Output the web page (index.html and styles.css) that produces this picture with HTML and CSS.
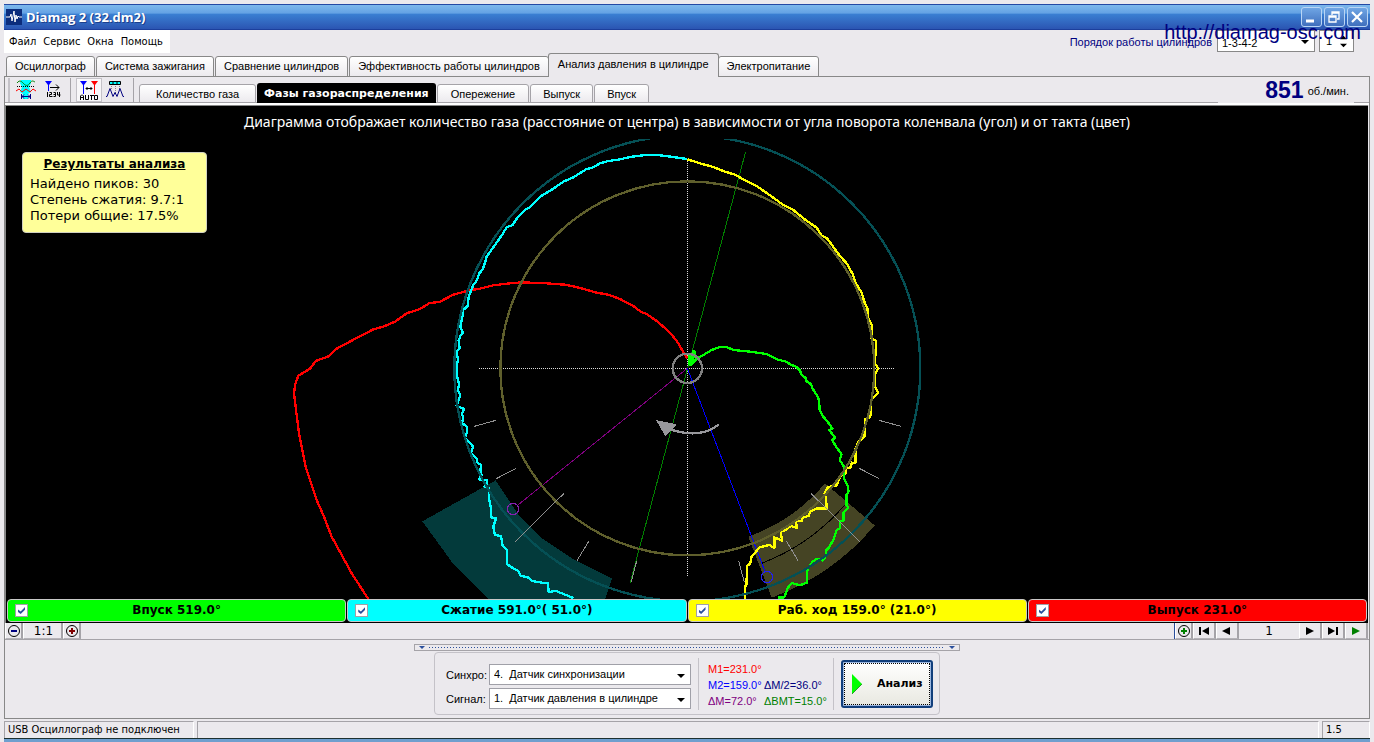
FILE: index.html
```html
<!DOCTYPE html>
<html lang="ru">
<head>
<meta charset="utf-8">
<title>Diamag 2 (32.dm2)</title>
<link rel="stylesheet" href="styles.css">
</head>
<body>
<header class="titlebar">
  <svg class="app-icon" viewBox="0 0 16 16" width="16" height="16"><rect width="16" height="16" fill="#0b2c7c"/><path d="M0 8h4l1-3 1 7 2-10 1 11 1-7 1 4 1-3 1 1h3" fill="none" stroke="#fff"/></svg>
  <h1 class="title">Diamag 2 (32.dm2)</h1>
  <button class="win-btn" aria-label="Свернуть"><svg viewBox="0 0 18 18"><path d="M4 13h8" stroke="#fff" stroke-width="3"/></svg></button>
  <button class="win-btn" aria-label="Развернуть"><svg viewBox="0 0 18 18"><path d="M4 8h7v6H4zM4 9h7M7 7V4h7v7h-2M7 5h7" fill="none" stroke="#fff" stroke-width="1.3"/></svg></button>
  <button class="win-btn" aria-label="Закрыть"><svg viewBox="0 0 18 18"><path d="M4 4l10 10M14 4L4 14" stroke="#fff" stroke-width="2.2"/></svg></button>
</header>
<div class="menurow">
  <nav class="menu">
    <button>Файл</button><button>Сервис</button><button>Окна</button><button>Помощь</button>
  </nav>
  <div class="order">
    <label for="order">Порядок работы цилиндров</label>
    <span class="combo order-combo"><select id="order"><option>1-3-4-2</option></select></span>
    <span class="spin"><input id="first" type="text" value="1" aria-label="Первый цилиндр"><svg viewBox="0 0 8 14" width="8" height="14"><path d="M0 5l4-4 4 4zM0 10l4 4 4-4z"/></svg></span>
  </div>
  <span class="watermark">http://diamag-osc.com</span>
</div>
<nav class="tabs">
  <button class="tab">Осциллограф</button>
  <button class="tab">Система зажигания</button>
  <button class="tab">Сравнение цилиндров</button>
  <button class="tab">Эффективность работы цилиндров</button>
  <button class="tab active">Анализ давления в цилиндре</button>
  <button class="tab">Электропитание</button>
</nav>
<main class="page">
  <div class="toolbar">
    <div class="tools">
      <button class="tool" aria-label="Фазы"><svg viewBox="0 0 22 22" width="22" height="22"><path d="M6 1h10v3l-2 4 2 5-3 2v5h-5v-5l-3-2 2-5-2-4z" fill="#0ff"/><path d="M2 4c3-4 5-1 7 1s4 2 6-1 3-2 5-1" fill="none" stroke="#008000"/><path d="M1 12l3-2 3 3 4-3 4 3 3-3 3 2" fill="none" stroke="#f00"/><path d="M2 7.500h18" stroke="#000" stroke-dasharray="1 1"/><path d="M7 17.500h8M9 15.500l-2 2 2 2M13 15.500l2 2-2 2M6.500 15v5M15.500 15v5" fill="none" stroke="#000080"/></svg></button>
      <button class="tool" aria-label="Нумерация"><svg viewBox="0 0 22 22" width="22" height="22"><path d="M2 2h7L6 6v6H5V6z" fill="#00f"/><path d="M7 8.500h9M13 5.500l3 3-3 3" fill="none" stroke="#000"/><path d="M4.500 13v5M6.500 13.500h2v2h-2v2h3M10.500 13.500h2v4h-2M10.500 15.500h2M14.500 13v3h3M16.500 13v5" fill="none" stroke="#000"/></svg></button>
      <button class="tool pressed" aria-label="Авто"><svg viewBox="0 0 22 22" width="22" height="22"><path d="M2 2h7L6 6v9H5V6z" fill="#00f"/><path d="M13 2h7l-3 4v9h-1V6z" fill="#f00"/><path d="M8 9.500h6M9.500 8L8 9.500 9.500 11M12.500 8l1.500 1.500-1.500 1.500" fill="none" stroke="#000"/><path d="M2.500 21v-4l1-1h1l1 1v4M2.500 18.500h3M7.500 16v4.500h3V16M12 16.500h4M13.500 16v5M16.500 16.500h3v4h-3z" fill="none" stroke="#000"/></svg></button>
      <button class="tool" aria-label="Пики"><svg viewBox="0 0 22 22" width="22" height="22"><path d="M4.500 2.500h11v3h-11z" fill="#0ff" stroke="#000"/><path d="M8 3v2M12 3v2" stroke="#000"/><path d="M6.500 7v4M10.500 7v7M14.500 7v4" stroke="#888" stroke-dasharray="1 1"/><path d="M1 17.500h1l3-8 3 8 2-4 2 4 3-8 3 8h1" fill="none" stroke="#000080"/></svg></button>
    </div>
    <nav class="subtabs">
      <button class="subtab">Количество газа</button>
      <button class="subtab active">Фазы газораспределения</button>
      <button class="subtab wide">Опережение</button>
      <button class="subtab">Выпуск</button>
      <button class="subtab">Впуск</button>
    </nav>
    <div class="rpm"><strong>851</strong><span>об./мин.</span></div>
  </div>
  <section class="plot">
    <p class="caption">Диаграмма отображает количество газа (расстояние от центра) в зависимости от угла поворота коленвала (угол) и от такта (цвет)</p>
    <svg class="chart" viewBox="-822 27 4086 1380" fill="none" shape-rendering="crispEdges" role="img" aria-label="Диаграмма фаз">
      <path fill="#033a3b" d="M647 1051L427 1174 520 1302 625 1407H975L996 1346 884 1290 786 1225 715 1154z"/>
      <g transform="translate(1170 690)">
        <path fill="#454424" d="M465 370L614 496A733 733 0 0 1 305 713L235 530A538 538 0 0 0 465 370z"/>
        <path stroke="#000" stroke-width="3" d="M275 610A626 626 0 0 0 527 432"/>
      </g>
      <path stroke="#dcdcdc" stroke-width="3" stroke-dasharray="3 3" d="M598 715.500H1842M1222.500 88V1342"/>
      <path stroke="#008000" stroke-width="3" d="M1397 65L1050 1360"/>
      <path stroke="#800080" stroke-width="3" d="M1222 715L715 1124"/><circle cx="699" cy="1137" r="17" stroke="#8520b0" stroke-width="3"/>
      <path stroke="#0000ff" stroke-width="3" d="M1222 715L1455 1325"/><circle cx="1461" cy="1341" r="17" stroke="#2222f0" stroke-width="3"/>
      <g stroke-width="7" stroke-linejoin="round">
        <path stroke="#f00" d="M1222 685L1208 663 1190 632 1165 603 1130 573 1100 552 1082 545 1060 528 1020 507 985 494 950 488 915 478 880 469 855 464 800 460 725 457 680 461 640 466 600 476 568 481 520 494 480 515 447 520 420 537 380 550 345 575 310 590 280 598 230 624 168 657 148 678 107 693 90 716 55 737 45 765 42 790 48 840 57 910 68 965 77 1010 95 1065 112 1115 130 1155 155 1220 185 1275 215 1330 265 1407"/>
        <path stroke="#0ff" d="M1222 87L1200 84 1165 79 1130 75 1095 75 1050 81 1020 88 985 93 960 100 940 112 918 118 880 142 850 155 820 176 780 200 750 232 733 241 710 266 698 285 680 292 668 312 645 345 620 380 615 398 608 418 598 430 590 452 580 465 572 485 566 500 563 528 550 540 547 560 541 590 549 607 541 618 536 632 539 655 530 665 534 690 529 710 530 735 538 765 533 778 541 795 536 810 530 827 552 837 546 850 550 868 545 878 561 890 562 902 555 925 570 938 579 950 573 970 590 985 592 998 603 1005 601 1025 605 1035 597 1048 620 1050 622 1060 614 1070 626 1074 628 1110 634 1140 632 1162 648 1165 640 1190 645 1215 663 1218 668 1248 680 1260 680 1302 700 1315 715 1323 722 1338 742 1341 757 1353 785 1358 804 1358 806 1387 825 1382 846 1390 880 1404"/>
        <path stroke="#ff0" transform="translate(1170 0)" d="M52 88L75 95 100 103 120 108 140 115 165 125 195 134 225 151 260 168 300 196 340 225 370 240 400 265 425 283 440 293 455 317 472 326 490 351 510 378 530 400 548 432 555 455 575 488 583 515 592 535 595 565 606 585 604 625 618 632 617 670 614 700 625 715 614 735 615 770 625 788 612 800 602 812 604 840 600 862 584 868 586 895 583 920 565 935 556 958 556 1000 545 998 543 1012 528 1015 528 1030 514 1035 498 1068 474 1071 464 1090 468 1105 470 1135 440 1135 420 1145 416 1158 398 1162 396 1174 378 1172 380 1194 362 1188 343 1202 332 1204 336 1232 313 1222 313 1254 298 1245 270 1252 262 1260 245 1280 240 1302 232 1306 229 1365 225 1370 225 1407"/>
        <path stroke="#0f0" transform="translate(1170 0)" d="M60 708L78 688 100 675 125 660 150 651 170 651 190 660 240 665 290 672 320 688 345 694 365 705 380 711 390 722 394 733 408 745 410 755 423 762 428 776 440 795 447 810 449 840 460 860 475 878 487 895 478 900 495 923 487 930 497 948 515 973 509 990 522 1010 522 1045 533 1068 536 1085 529 1095 529 1125 534 1133 520 1148 520 1172 509 1175 510 1195 500 1200 490 1230 477 1252 468 1262 467 1280 458 1292 440 1286 428 1295 416 1312 410 1330 411 1358 390 1366 365 1359 353 1374 343 1402H325M56 706L70 662 75 668 64 705M58 703V676"/>
        <circle cx="1222" cy="715" r="699" stroke="#055055"/>
        <circle cx="1222" cy="715" r="561" stroke="#5f5f2c"/>
        <circle cx="1222" cy="715" r="44" stroke="#808080"/>
        <path stroke="#98989c" d="M1317 883C1275 918 1222 915 1170 898"/>
      </g>
      <path fill="#98989c" d="M1128 870L1190 883 1156 919z"/>
      <path stroke="#909090" stroke-width="3" d="M583 889L648 871M649 1046L708 1015M706 1235L852 1090M891 1292L926 1234M1054 1355L1070 1293M1797 871L1863 889M1738 1015L1797 1046M1593 1090L1739 1235M1519 1233L1554 1292M1376 1293L1393 1357"/>
    </svg>
    <aside class="results">
      <h2>Результаты анализа</h2>
      <p>Найдено пиков: 30</p>
      <p>Степень сжатия: 9.7:1</p>
      <p>Потери общие: 17.5%</p>
    </aside>
    <div class="legend">
      <label class="stroke intake"><input type="checkbox" checked><span>Впуск 519.0°</span></label>
      <label class="stroke compression"><input type="checkbox" checked><span>Сжатие 591.0°( 51.0°)</span></label>
      <label class="stroke power"><input type="checkbox" checked><span>Раб. ход 159.0° (21.0°)</span></label>
      <label class="stroke exhaust"><input type="checkbox" checked><span>Выпуск 231.0°</span></label>
    </div>
  </section>
  <div class="pager">
    <button class="cell small" aria-label="Уменьшить"><svg viewBox="0 0 14 14" width="14" height="14"><circle cx="7" cy="7" r="5.500" fill="none" stroke="#000"/><path d="M4 7h6" stroke="#000080" stroke-width="2"/></svg></button>
    <output class="cell scale">1:1</output>
    <button class="cell small" aria-label="Увеличить"><svg viewBox="0 0 14 14" width="14" height="14"><circle cx="7" cy="7" r="5.500" fill="none" stroke="#000"/><path d="M4 7h6M7 4v6" stroke="#800000" stroke-width="2"/></svg></button>
    <span class="spacer"></span>
    <button class="cell small" aria-label="Добавить"><svg viewBox="0 0 14 14" width="14" height="14"><circle cx="7" cy="7" r="5.500" fill="none" stroke="#000"/><path d="M4 7h6M7 4v6" stroke="#008000" stroke-width="2"/></svg></button>
    <button class="cell nav" aria-label="Первый"><svg viewBox="0 0 14 10" width="14" height="10"><path d="M2 1h2v8H2zM12 1v8L5 5z"/></svg></button>
    <button class="cell nav" aria-label="Назад"><svg viewBox="0 0 14 10" width="14" height="10"><path d="M10 1v8L2 5z"/></svg></button>
    <output class="cell number">1</output>
    <button class="cell nav" aria-label="Вперёд"><svg viewBox="0 0 14 10" width="14" height="10"><path d="M3 1v8l8-4z"/></svg></button>
    <button class="cell nav" aria-label="Последний"><svg viewBox="0 0 14 10" width="14" height="10"><path d="M10 1h2v8h-2zM2 1v8l7-4z"/></svg></button>
    <button class="cell nav" aria-label="Пуск"><svg viewBox="0 0 14 10" width="14" height="10"><path d="M3 1v8l8-4z" fill="#008000"/></svg></button>
  </div>
  <div class="panel">
    <div class="splitter"><i class="tri"></i><i class="dots"></i><i class="tri"></i></div>
    <div class="group">
      <div class="sources">
        <label for="sync">Синхро:</label>
        <span class="combo"><select id="sync"><option>4.&nbsp; Датчик синхронизации</option></select></span>
        <label for="signal">Сигнал:</label>
        <span class="combo"><select id="signal"><option>1.&nbsp; Датчик давления в цилиндре</option></select></span>
      </div>
      <div class="marks">
        <span class="m1">M1=231.0°</span><span></span>
        <span class="m2">M2=159.0°</span><span class="half">ΔM/2=36.0°</span>
        <span class="dm">ΔM=72.0°</span><span class="bmt">ΔВМТ=15.0°</span>
      </div>
      <button class="analyze"><svg viewBox="0 0 10 20" width="10" height="20"><path d="M0 0l10 10L0 20z" fill="#0f0"/><path d="M0 20L10 10" stroke="#2a9a2a"/></svg><span>Анализ</span></button>
    </div>
  </div>
</main>
<footer class="status">
  <span class="state">USB Осциллограф не подключен</span><span class="message"></span><span class="version">1.5</span>
</footer>
<div class="edge"></div>
</body>
</html>
```
FILE: styles.css
```css
* { box-sizing: border-box; }
html, body { margin: 0; }
body {
  display: flex;
  flex-direction: column;
  height: 100vh;
  min-height: 560px;
  padding: 4px 4px 0;
  background: linear-gradient(#ebe9ed, #ebe9ed) content-box, #fff;
  color: #000;
  font: 11px/13px "Liberation Sans", Arial, sans-serif;
}
button { font: inherit; color: inherit; margin: 0; padding: 0; border: 0; background: none; }
h1, h2, p { margin: 0; font-size: inherit; }

.titlebar {
  flex: none;
  display: flex;
  align-items: center;
  gap: 2px;
  height: 26px;
  padding: 0 2px;
  border-top: 1px solid #2449a4;
  border-bottom: 1px solid #1c3f9c;
  background: linear-gradient(#7db8ec, #64a2e4 34%, #3a7fd2 38%, #2b55b2);
}
.title {
  flex: 1;
  padding-left: 2px;
  color: #fff;
  font: bold 13px/22px "Open Sans", "Noto Sans", sans-serif;
  text-shadow: 1px 1px #1c3f8c;
}
.win-btn {
  width: 21px;
  height: 20px;
  border: 1px solid #b9d5f5;
  border-radius: 3px;
  background: linear-gradient(#6fa5e4, #3f6fbd);
}
.win-btn svg { display: block; width: 18px; height: 18px; }

.menurow { flex: none; position: relative; display: flex; justify-content: space-between; height: 23px; }
.menu {
  display: flex;
  gap: 7px;
  width: 166px;
  padding-left: 5px;
  background: #fff;
  font: 11px/24px "DejaVu Sans Condensed", "DejaVu Sans", sans-serif;
}
.order { display: flex; gap: 4px; padding-right: 16px; color: #000080; line-height: 24px; }
.combo { position: relative; display: block; }
.combo select {
  display: block;
  width: 100%;
  height: 100%;
  padding: 0 4px;
  border: 1px solid #a0a0a8;
  border-radius: 0;
  appearance: none;
  background: #fff;
  color: #000;
  font: inherit;
}
.combo::after {
  content: "";
  position: absolute;
  right: 6px;
  top: 50%;
  margin-top: -1px;
  border: 4px solid transparent;
  border-top-color: #000;
  border-bottom: 0;
}
.order-combo { width: 98px; height: 22px; margin-left: 1px; }
.order-combo select { border-color: #888; }
.spin { display: flex; align-items: center; width: 35px; height: 22px; padding-right: 6px; border: 1px solid #888; background: #fff; }
.spin input { width: 20px; padding: 0 0 0 6px; border: 0; background: none; font: inherit; line-height: 16px; }
.watermark { position: absolute; right: 9px; top: -9px; color: #000080; font-size: 20px; line-height: 23px; }

.tabs { flex: none; display: flex; align-items: flex-end; gap: 1px; height: 24px; padding-left: 2px; position: relative; z-index: 1; margin-bottom: -1px; }
.tab {
  height: 21px;
  padding: 0 8px;
  border: 1px solid #888;
  border-radius: 3px 3px 0 0;
  background: linear-gradient(#fff, #eceaee);
}
.tab.active { height: 24px; margin: 0 -2px; padding: 0 9px 2px; border-bottom: 0; background: #ebe9ed; }

.page { flex: 1; min-height: 0; display: flex; flex-direction: column; border: 1px solid #888; }
.toolbar { flex: none; display: flex; height: 28px; padding: 1px 0 0 3px; background: linear-gradient(#a5a3a8, #a5a3a8) 0 25px / 100% 1px no-repeat, linear-gradient(#fff, #fff) 0 26px / 100% 2px no-repeat; }
.tools { display: flex; width: 127px; height: 24px; border-left: 2px solid #c4c2c8; }
.tool { width: 28px; height: 24px; padding-left: 5px; }
.tool svg { display: block; }
.tool:nth-child(2) { width: 33px; border-right: 1px solid #a5a3a8; }
.tool:nth-child(3) { margin-left: 5px; }
.tool.pressed { width: 26px; background: #f8f7f9; border: 1px solid #c4c2c8; padding-left: 1px; }
.tool:nth-child(4) { width: 32px; border-right: 1px solid #a5a3a8; padding-left: 3px; }
.subtabs { display: flex; align-items: flex-end; gap: 1px; height: 25px; padding-left: 4px; flex: 1; }
.subtab {
  height: 19px;
  padding: 1px 12px 0;
  border: 1px solid #a5a3a8;
  border-radius: 3px 3px 0 0;
  background: linear-gradient(#fff, #eceaee);
}
.subtab:first-child { padding: 1px 16px 0; }
.subtab.wide { padding: 1px 13px 0; }
.subtab.active { height: 20px; padding: 0 7px; border: 0; background: #000; color: #fff; font: bold 11px/13px "DejaVu Sans", sans-serif; }
.rpm { display: flex; align-items: center; gap: 4px; width: 136px; height: 25px; margin-right: 15px; background: #ebe9ed; justify-content: flex-end; padding-right: 5px; }
.rpm strong { color: #000080; font-size: 23px; line-height: 25px; }
.rpm span { padding-top: 2px; }

.plot { position: relative; flex: 1; min-height: 0; display: flex; flex-direction: column; margin-right: 1px; border-top: 1px solid #888; border-left: 1px solid #888; background: #000; }
.caption { flex: none; height: 33px; color: #fff; text-align: center; font: 14px/31px "Noto Sans", sans-serif; }
.chart { display: block; flex: 1 1 0; width: 100%; min-height: 0; }
.results {
  position: absolute;
  left: 16px;
  top: 46px;
  width: 185px;
  height: 81px;
  padding: 3px 7px;
  border: 1px solid #d0d0c0;
  border-radius: 4px;
  background: #ff9;
  font: 13px/16px "DejaVu Sans", sans-serif;
}
.results h2 { margin-bottom: 4px; text-align: center; text-decoration: underline; font-size: 12px; line-height: 16px; }
.legend { flex: none; display: grid; grid-template-columns: repeat(4, 1fr); gap: 1px; padding: 0 1px 1px; }
.stroke { display: flex; align-items: center; height: 23px; padding: 0 7px; border: 1px solid #c8c8c8; border-radius: 4px; font: bold 12px/21px "DejaVu Sans", sans-serif; }
.stroke span { flex: 1; padding-right: 13px; text-align: center; }
.stroke input { width: 13px; height: 13px; margin: 0; border: 1px solid #a0a0a8; appearance: none; background: #fff; }
.stroke input:checked::before { content: ""; display: block; width: 7px; height: 7px; margin: 2px; background: #2a4f9c; clip-path: polygon(0 35%, 38% 65%, 100% 0, 100% 40%, 38% 100%, 0 70%); }
.intake { background: #0f0; }
.compression { background: #0ff; }
.power { background: #ff0; }
.exhaust { background: #f00; }

.pager { flex: none; display: flex; height: 17px; padding-right: 1px; border-bottom: 1px solid #a5a3a8; }
.cell { display: flex; align-items: center; justify-content: center; height: 16px; border-right: 2px solid #a5a3a8; border-bottom: 1px solid #b5b3b8; border-left: 1px solid #fff; font: 12px/16px "DejaVu Sans", sans-serif; }
.cell svg { display: block; }
.small { width: 18px; }
.scale { width: 40px; padding-left: 2px; }
.nav { width: 23px; }
.number { width: 60px; border: 0; }
.spacer { flex: 1; border-right: 1px solid #2a4f9c; }

.panel { flex: none; display: flex; flex-direction: column; align-items: center; height: 78px; padding-top: 4px; }
.splitter { display: flex; align-items: center; gap: 4px; width: 546px; height: 7px; padding: 0 4px; border: 1px solid #a5a3a8; }
.tri { border: 3px solid transparent; border-top-color: #2a4f9c; border-bottom: 0; }
.dots { flex: 1; height: 1px; background: repeating-linear-gradient(90deg, #2a4f9c 0 1px, transparent 1px 3px); }
.group { display: flex; align-items: center; width: 506px; height: 63px; margin-top: 1px; padding: 0 6px 0 11px; border: 1px solid #c4c2c8; border-radius: 4px; }
.sources { display: grid; grid-template-columns: 39px 202px; grid-auto-rows: 21px; gap: 3px 4px; align-items: center; padding-top: 6px; }
.sources label { padding-top: 2px; white-space: nowrap; }
.sources .combo { height: 21px; }
.marks { display: grid; grid-template-columns: 52px auto; grid-auto-rows: 16px; align-items: center; gap: 0 4px; width: 136px; margin-left: 7px; padding: 4px 0 0 9px; border: solid #c4c2c8; border-width: 0 1px; }
.m1 { color: #f00; }
.m2 { color: #00f; }
.half { color: #000080; }
.dm { color: #800080; }
.bmt { color: #008000; }
.analyze {
  display: flex;
  align-items: center;
  gap: 15px;
  width: 92px;
  height: 48px;
  margin-left: auto;
  padding-left: 9px;
  border: 2px solid #123f7c;
  border-radius: 3px;
  outline: 1px dotted #000;
  outline-offset: -4px;
  background: linear-gradient(#fff, #e8e8e0);
  box-shadow: inset 0 0 0 1px #9db8e0;
  font: bold 11px/13px "DejaVu Sans", sans-serif;
}

.status { flex: none; display: flex; gap: 3px; height: 17px; margin-top: 2px; font: 11px/16px "DejaVu Sans Condensed", "DejaVu Sans", sans-serif; }
.status span { padding-left: 3px; border-top: 1px solid #a5a3a8; border-left: 1px solid #a5a3a8; border-right: 1px solid #fff; white-space: nowrap; }
.state { width: 190px; }
.message { flex: 1; }
.version { width: 48px; }
.edge { flex: none; height: 4px; border-top: 1px solid #1c3030; background: #6f9fce; }
```
